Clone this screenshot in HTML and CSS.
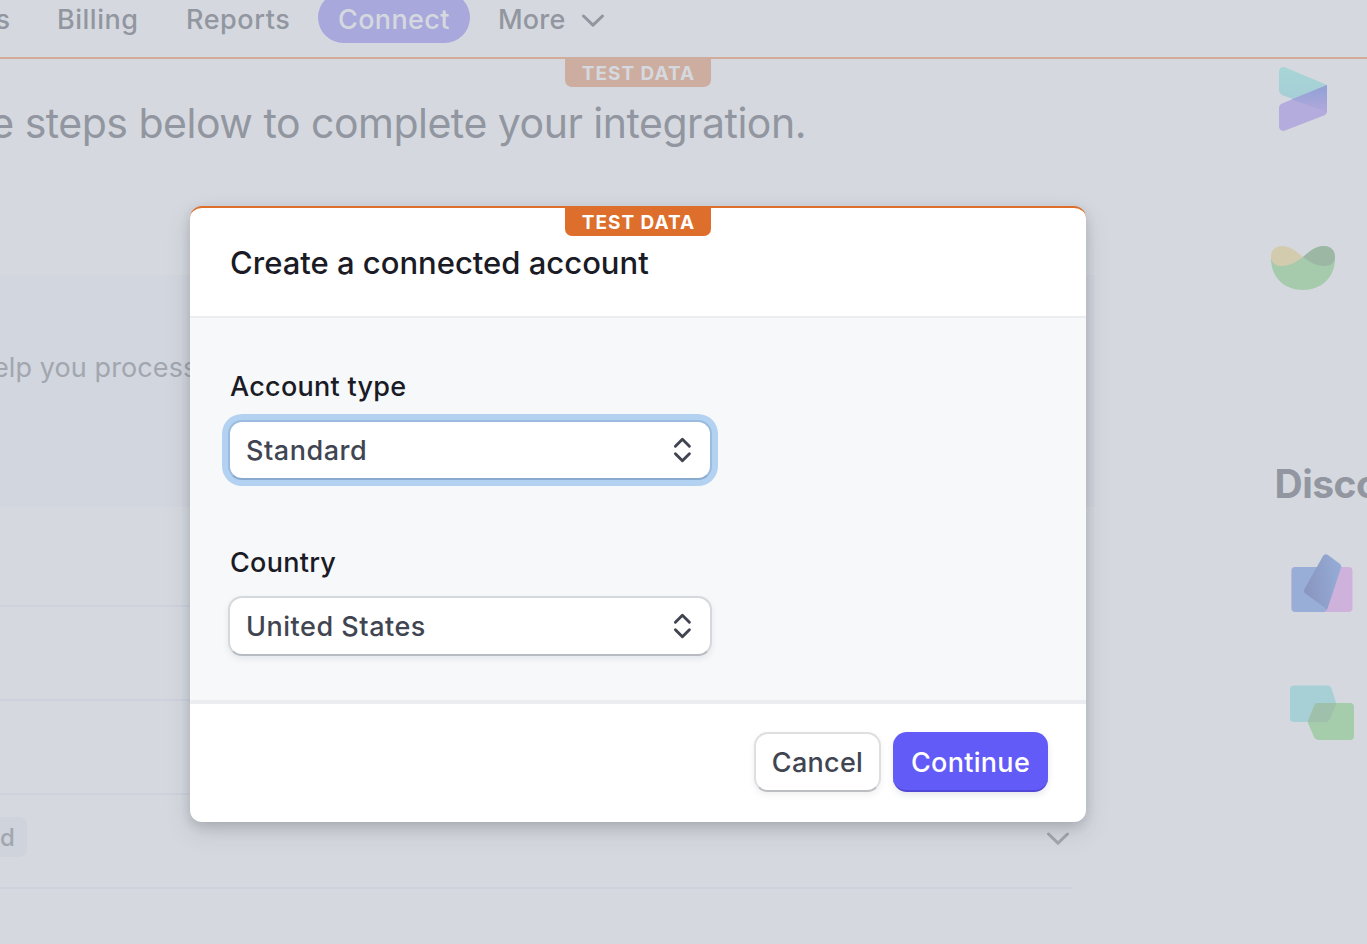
FILE: index.html
```html
<!DOCTYPE html>
<html lang="en">
<head>
<meta charset="utf-8">
<title>Create a connected account</title>
<link rel="stylesheet" href="styles.css">
</head>
<body>
<div class="page">
  <nav class="nav">
    <a class="nav-item nav-cut">s</a>
    <a class="nav-item nav-billing">Billing</a>
    <a class="nav-item nav-reports">Reports</a>
    <a class="nav-item nav-active">Connect</a>
    <a class="nav-item nav-more">More
      <svg class="chevron" width="24" height="14" viewBox="0 0 24 14"><path d="M2.5 2 12 11.2 21.5 2"/></svg>
    </a>
    <span class="test-tag tag-muted">TEST DATA</span>
  </nav>
  <div class="columns">
    <main class="main">
      <div class="intro"><h2 class="intro-text">e steps below to complete your integration.</h2></div>
      <section class="band"><p class="band-text">elp you process</p></section>
      <div class="row"></div>
      <div class="row"></div>
      <div class="row"></div>
      <div class="row row-last">
        <span class="pill">d</span>
        <svg class="chevron" width="24" height="14" viewBox="0 0 24 14"><path d="M2.5 2 12 11.2 21.5 2"/></svg>
      </div>
    </main>
    <aside class="aside">
      <svg class="art art-billing" width="48" height="64" viewBox="0 0 48 64">
        <defs>
          <linearGradient id="g1" x1="0" y1="0" x2="0" y2="1"><stop offset="0" stop-color="#8fa1d5"/><stop offset="1" stop-color="#b2a8dc"/></linearGradient>
          <linearGradient id="g2" x1="0" y1="0" x2="0" y2="1"><stop offset="0" stop-color="#a8d5d6"/><stop offset="1" stop-color="#a4ccd6"/></linearGradient>
        </defs>
        <path fill="url(#g2)" d="M0 5C0 1 3 -1 6.500 .5L48 18V45L3 28Q0 26.500 0 24Z"/>
        <path fill="#b4acdc" d="M0 41Q0 38 3 36.500L48 18V44Q48 47 45 48.500L6 63.500C3 65 0 62.500 0 59Z"/>
        <path fill="url(#g1)" d="M12.500 32.500 48 18V45Z"/>
      </svg>
      <svg class="art art-bowl" width="64" height="44" viewBox="0 0 64 44">
        <path fill="#a5caac" d="M0 12C0 32 14 44 32 44S64 32 64 12C64 4 59 0 53 0C44 0 38 6 32 11C20 19 8 20 0 12Z"/>
        <path fill="#d3cbae" d="M32 11C26 6 20 0 11 0C5 0 0 4 0 10.500C0 17 5 20 10 20C19 20 25 16 32 11Z"/>
        <path fill="#9cb8a5" d="M32 11C38 6 44 0 53 0C59 0 64 4 64 10.500C64 17 59 20 54 20C45 20 39 16 32 11Z"/>
      </svg>
      <h3 class="discover">Discover</h3>
      <svg class="art art-cards" width="62" height="58" viewBox="0 0 62 58">
        <defs><linearGradient id="g3" x1="0" y1=".6" x2="1" y2=".4"><stop offset="0" stop-color="#8995be"/><stop offset="1" stop-color="#95acd6"/></linearGradient></defs>
        <rect x=".5" y="13" width="61" height="45" rx="4" fill="#cfb2dc"/>
        <path fill="#98aed7" d="M4.500 13H47L36 55Q35 58 32 58H4.500Q.5 58 .5 54V17Q.5 13 4.500 13Z"/>
        <path fill="url(#g3)" d="M32 2Q34 -1 37 1L48.500 9.500Q51 11 50 14L36.500 54.500Q35.500 57 33 53L15 40Q12 38 13.500 35Z"/>
      </svg>
      <svg class="art art-tags" width="64" height="55" viewBox="0 0 64 55">
        <path fill="#a6d0d6" d="M4 .5H37Q40 .5 41.500 3.500L46 17.500V20L40 34Q38.500 37 36 37H4Q0 37 0 33V4.500Q0 .5 4 .5Z"/>
        <path fill="#a5cdac" d="M27 18H60Q64 18 64 22V51Q64 55 60 55H28Q25.500 55 24 52L18 38V36L24 21Q25 18 27 18Z"/>
        <path fill="#9fc0ab" d="M27 18H46V20L40 34Q38.500 37 36 37H18V36L24 21Q25 18 27 18Z"/>
      </svg>
    </aside>
  </div>
</div>

<div class="modal" role="dialog">
  <span class="test-tag">TEST DATA</span>
  <header class="modal-header"><h1 class="modal-title">Create a connected account</h1></header>
  <div class="modal-body">
    <label class="label label-type">Account type</label>
    <div class="select select-focus"><span class="value">Standard</span>
      <svg class="sort" width="20" height="28" viewBox="0 0 20 28"><path d="M3.400 10.300 10.400 3.200 17.400 10.300M3.400 17.700 10.400 24.800 17.400 17.700"/></svg>
    </div>
    <label class="label label-country">Country</label>
    <div class="select"><span class="value">United States</span>
      <svg class="sort" width="20" height="28" viewBox="0 0 20 28"><path d="M3.400 10.300 10.400 3.200 17.400 10.300M3.400 17.700 10.400 24.800 17.400 17.700"/></svg>
    </div>
  </div>
  <footer class="modal-footer">
    <button class="btn btn-cancel">Cancel</button>
    <button class="btn btn-continue">Continue</button>
  </footer>
</div>
</body>
</html>
```

FILE: styles.css
```css
* { box-sizing: border-box; }
body {
  margin: 0;
  width: 1367px;
  height: 944px;
  overflow: hidden;
  position: relative;
  background: #d5d9df;
  color: #9296a0;
  font-family: Inter, "Liberation Sans", sans-serif;
}
h1, h2, h3, p { margin: 0; }
svg { display: block; flex: none; }
.page { height: 944px; overflow: hidden; }

.nav {
  position: relative;
  display: flex;
  align-items: flex-start;
  height: 59px;
  border-bottom: 2px solid #d2ab99;
}
.nav-item {
  height: 43px;
  padding-top: 2px;
  font-size: 27px;
  font-weight: 500;
  line-height: 36px;
  white-space: nowrap;
}
.nav-cut { width: 10px; display: flex; justify-content: flex-end; }
.nav-billing { margin-left: 47px; width: 129px; letter-spacing: .5px; }
.nav-reports { width: 132px; letter-spacing: .55px; }
.nav-active {
  width: 152px;
  height: 51px;
  margin-top: -8px;
  padding: 10px 0 0 20px;
  border-radius: 26px;
  background: #a8a8dc;
  color: #d5d9df;
  letter-spacing: .35px;
}
.nav-more { margin-left: 28px; display: flex; gap: 15px; letter-spacing: .2px; }
.nav-more .chevron { margin-top: 12px; }
.chevron path { fill: none; stroke: #9296a0; stroke-width: 3; stroke-linecap: round; stroke-linejoin: round; }

.test-tag {
  position: absolute;
  top: 0;
  left: 375px;
  width: 146px;
  height: 28px;
  padding-left: 1px;
  border-radius: 0 0 7px 7px;
  background: #dd6e2b;
  color: #fff;
  font-size: 19px;
  font-weight: 700;
  line-height: 29px;
  letter-spacing: 1px;
  text-align: center;
  white-space: nowrap;
}
.tag-muted { top: 57px; left: 565px; height: 30px; line-height: 33px; background: #cdad9f; color: #d5d9df; }

.columns { display: flex; height: 885px; }
.main { width: 1095px; flex: none; }
.intro {
  display: flex;
  justify-content: flex-end;
  width: 806px;
  height: 216px;
  padding-top: 38px;
}
.intro-text { font-size: 41px; font-weight: 400; line-height: 52px; letter-spacing: -.5px; white-space: nowrap; }
.band { height: 232px; padding-top: 75px; background: #d2d6de; }
.band-text { margin-left: -7px; font-size: 27px; line-height: 36px; letter-spacing: .1px; color: #a2a6af; white-space: nowrap; }
.row { width: 1072px; height: 94px; border-bottom: 2px solid #ced2dc; }
.band + .row { height: 100px; }
.row-last { display: flex; justify-content: space-between; padding: 22px 2px 0 0; }
.row-last .chevron { margin-top: 15px; }
.row-last .chevron path { stroke: #a2a6af; }
.pill {
  width: 27px;
  height: 40px;
  border-radius: 0 8px 8px 0;
  background: #ced3dc;
  color: #a2a6af;
  font-size: 24px;
  font-weight: 500;
  line-height: 42px;
}

.aside { flex: 1; padding: 8px 0 0 176px; overflow: hidden; }
.art-billing { margin-left: 8px; }
.art-bowl { margin-top: 115px; }
.discover { margin: 171px 0 0 3.5px; font-size: 39px; font-weight: 700; line-height: 46px; letter-spacing: -.5px; }
.art-cards { margin: 47px 0 0 20px; }
.art-tags { margin: 73px 0 0 19px; }

.modal {
  position: absolute;
  top: 206px;
  left: 190px;
  display: flex;
  flex-direction: column;
  width: 896px;
  height: 616px;
  border-top: 2px solid #dd6e2b;
  border-radius: 12px;
  background: #fff;
  box-shadow: 0 10px 24px rgba(60, 66, 87, .16), 0 4px 12px rgba(0, 0, 0, .14);
}
.modal-header { height: 110px; padding: 35px 0 0 40px; border-bottom: 2px solid #ebedf1; }
.modal-title { color: #1a1b25; font-size: 31px; font-weight: 500; line-height: 40px; white-space: nowrap; }
.modal-body {
  height: 386px;
  padding: 51px 38px 0;
  border-bottom: 4px solid #ebedf1;
  background: #f6f8fa;
}
.label { display: block; height: 51px; padding-left: 2px; color: #1a1b25; font-size: 27px; font-weight: 500; line-height: 36px; letter-spacing: .27px; }
.select {
  display: flex;
  align-items: center;
  justify-content: space-between;
  width: 484px;
  height: 60px;
  padding: 0 18px 0 16px;
  border: 2px solid #d5d8dc;
  border-bottom-color: #b8bbc0;
  border-radius: 14px;
  background: #fff;
  box-shadow: 0 3px 6px rgba(60, 66, 87, .09);
  color: #414552;
  font-size: 27px;
  font-weight: 500;
  letter-spacing: .52px;
}
.select-focus {
  margin-bottom: 65px;
  border-color: #9bbcdf;
  border-bottom-color: #88aacf;
  box-shadow: 0 0 0 6px #b3d2f1;
}
.sort path { fill: none; stroke: #414552; stroke-width: 2.9; stroke-linecap: round; stroke-linejoin: round; }

.modal-footer { display: flex; justify-content: flex-end; gap: 12px; padding: 28px 38px 0; }
.btn {
  height: 60px;
  padding: 0;
  border-radius: 14px;
  font: 500 27px/57px Inter, "Liberation Sans", sans-serif;
  letter-spacing: .3px;
  text-align: center;
}
.btn-cancel {
  width: 127px;
  border: 2px solid #dedfe1;
  border-bottom-color: #bdbec1;
  background: #fff;
  color: #414552;
  box-shadow: 0 3px 6px rgba(60, 66, 87, .08);
}
.btn-continue {
  width: 155px;
  padding-top: 2px;
  border: 0 solid #5148d6;
  border-bottom-width: 2px;
  background: #635bf7;
  color: #fff;
  line-height: 58px;
  box-shadow: 0 3px 6px rgba(60, 66, 87, .12);
}
```
